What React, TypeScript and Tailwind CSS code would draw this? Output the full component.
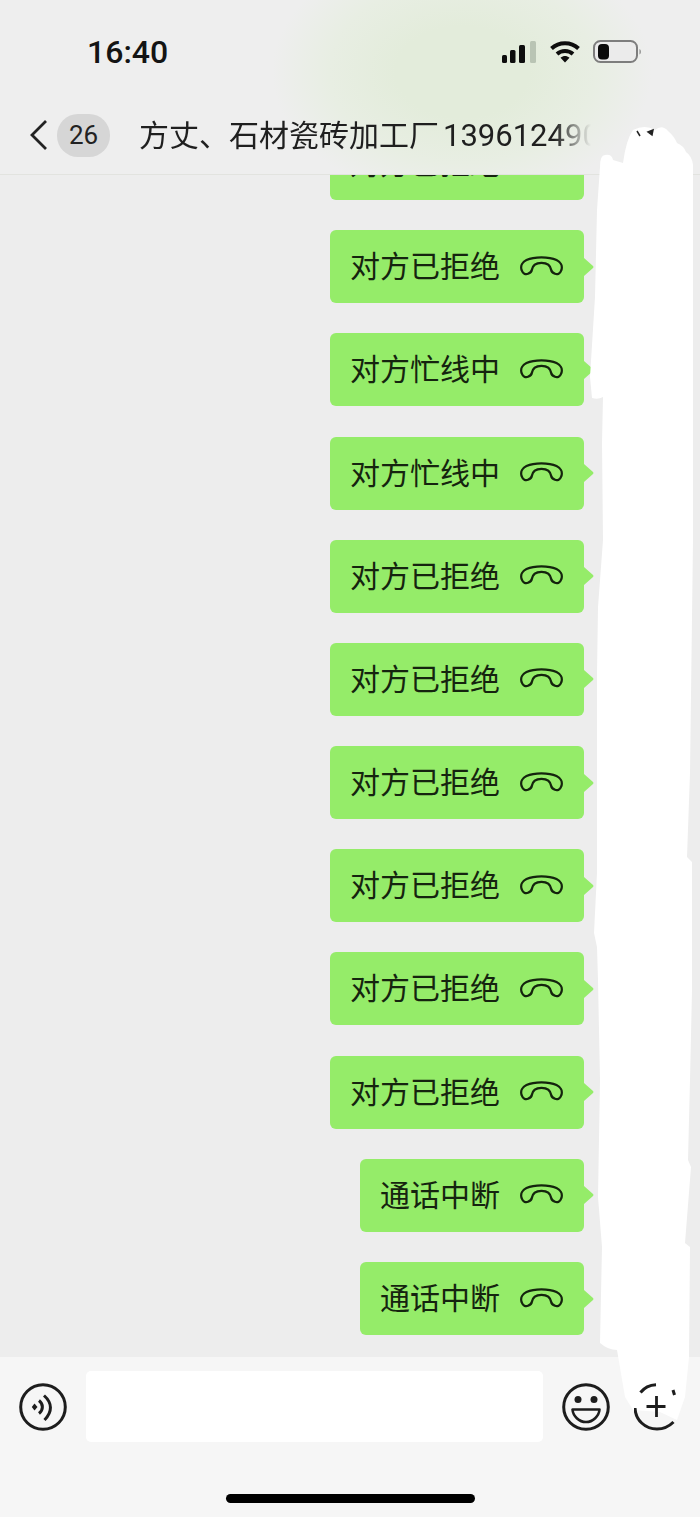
import React from "react";

const cjk = "font-['Roboto','Noto_Sans_CJK_SC',sans-serif]";

function HangUp() {
  return (
    <svg width="43" height="20" viewBox="0 0 43 20" fill="none" className="-mt-[2px] shrink-0">
      <path
        d="M1.800 14.500C0 10 2.500 6 6.500 4C11 1.900 16 1.300 21.500 1.300C27 1.300 32 1.900 36.500 4C40.500 6 43 10 41.200 14.500C40.200 17.500 37.500 18.800 35 17.800C33 17 31.500 16 31.200 14C30.500 9.500 27 6.800 21.500 6.800C16 6.800 12.500 9.500 11.800 14C11.500 16 10 17 8 17.800C5.500 18.800 2.800 17.500 1.800 14.500Z"
        stroke="#14240d"
        strokeWidth="2.300"
        strokeLinejoin="round"
      />
    </svg>
  );
}

function Bubble({ text }: { text: string }) {
  return (
    <div className="relative flex h-[73px] shrink-0 items-center gap-5 rounded-[6px] bg-[#95ec69] pl-5 pr-[21px]">
      <span className={`${cjk} pt-px text-[30px] leading-none text-[#15240f]`}>{text}</span>
      <HangUp />
      <svg width="10" height="18" viewBox="0 0 10 18" className="absolute left-full top-1/2 -translate-y-1/2">
        <path d="M0 0L9 8C9.600 8.600 9.600 9.400 9 10L0 18Z" fill="#95ec69" />
      </svg>
    </div>
  );
}

function StatusIcons() {
  return (
    <div className="flex items-center">
      <svg width="34" height="22" viewBox="0 0 34 22" className="mr-[14px]">
        <rect x="0" y="14" width="5" height="8" rx="1.500" fill="#0d0d0d" />
        <rect x="8" y="9" width="5.500" height="13" rx="1.500" fill="#0d0d0d" />
        <rect x="17" y="4" width="6" height="18" rx="1.500" fill="#0d0d0d" />
        <rect x="28" y="0" width="6" height="22" rx="1.500" fill="#b9c4b4" />
      </svg>
      <svg width="30" height="22" viewBox="0 0 30 22" className="mr-[13px]">
        <path d="M1.500 7.500C9 0.500 21 0.500 28.500 7.500" stroke="#0d0d0d" strokeWidth="4" fill="none" />
        <path d="M7 13C11.500 9 18.500 9 23 13" stroke="#0d0d0d" strokeWidth="4" fill="none" />
        <path d="M10.500 16.800C13.500 14.500 16.500 14.500 19.500 16.800L15 21.500Z" fill="#0d0d0d" />
      </svg>
      <svg width="49" height="24" viewBox="0 0 49 24">
        <rect x="1" y="1" width="43" height="21" rx="6.500" fill="#ebebeb" stroke="#7d7d7d" strokeWidth="2" />
        <rect x="5" y="4" width="11" height="15.500" rx="4" fill="#0a0a0a" />
        <path d="M46.500 9C48.300 9.800 48.300 13.800 46.500 14.500Z" fill="#888" />
      </svg>
    </div>
  );
}

function Header() {
  return (
    <header className="flex h-[175px] shrink-0 flex-col border-b border-[#e2e3df] bg-[#eeeeee] bg-[radial-gradient(ellipse_190px_130px_at_462px_72px,#e3ecdb_35%,#e8eee3_70%,#eeeeee)]">
      <div className="flex h-[104px] shrink-0 items-center justify-between pl-[87px] pr-[58px]">
        <span className="font-['Roboto',sans-serif] text-[32px] font-medium leading-none text-[#141414]">16:40</span>
        <StatusIcons />
      </div>
      <div className="flex h-[62px] shrink-0 items-center">
        <svg width="20" height="32" viewBox="0 0 20 32" className="ml-[29px] shrink-0">
          <path d="M17 2L3 16L17 30" stroke="#222" strokeWidth="2.800" fill="none" />
        </svg>
        <div className="ml-2 flex h-[43px] w-[53px] shrink-0 items-center justify-center rounded-[21px] bg-[#d6d6d6]">
          <span className="font-['Roboto',sans-serif] text-[26px] leading-none text-[#222]">26</span>
        </div>
        <div
          className={`${cjk} ml-[29px] w-[452px] overflow-hidden whitespace-nowrap text-[30px] leading-none text-[#1f1f1f] [mask-image:linear-gradient(to_right,#000_415px,transparent_452px)]`}
        >
          方丈、石材瓷砖加工厂<span className="ml-1 text-[31px]">139612490</span>
        </div>
      </div>
    </header>
  );
}

function Composer() {
  return (
    <footer className="flex flex-1 flex-col bg-[#f6f6f6] pt-[14px]">
      <div className="flex items-center pl-[19px]">
        <svg width="48" height="48" viewBox="0 0 48 48" fill="none" stroke="#1d1d1d" className="shrink-0">
          <circle cx="24" cy="24" r="22.300" strokeWidth="3" />
          <path d="M15.500 20.500L18.500 24L15.500 27.500L12.800 24Z" fill="#1d1d1d" stroke="none" />
          <path d="M20 17.500C24.500 21 24.500 27 20 30.500" strokeWidth="3" />
          <path d="M25 12.500C33.500 20 33.500 29 25.500 37" strokeWidth="3" />
        </svg>
        <div className="ml-[19px] h-[71px] w-[457px] shrink-0 rounded-[5px] bg-white" />
        <svg width="48" height="48" viewBox="0 0 48 48" fill="none" stroke="#1d1d1d" className="ml-[19px] shrink-0">
          <circle cx="24" cy="24" r="22.300" strokeWidth="3" />
          <circle cx="16" cy="16.500" r="3.500" fill="#1d1d1d" stroke="none" />
          <circle cx="32" cy="16.500" r="3.500" fill="#1d1d1d" stroke="none" />
          <path d="M10.500 26.500H37.500C37 33 31 39 24 39C17 39 11 33 10.500 26.500Z" strokeWidth="2.600" strokeLinejoin="round" />
        </svg>
        <svg width="48" height="48" viewBox="0 0 48 48" fill="none" stroke="#1d1d1d" strokeWidth="3" className="relative z-20 ml-6 shrink-0">
          <path d="M6.500 9.500C10 5 15 2 22 1.700" />
          <path d="M1 25C1.500 37 11 46 23 46C30 46 35 43.500 39.500 39" />
          <path d="M39 7L40.500 12" />
          <path d="M12.500 23.500H31.500M22.500 13V34" strokeWidth="2.800" />
        </svg>
      </div>
      <div className="mx-auto mt-[52px] h-[9px] w-[249px] rounded-full bg-black" />
    </footer>
  );
}

function Scribble() {
  return (
    <svg width="700" height="1517" viewBox="0 0 700 1517" className="pointer-events-none absolute inset-0 z-10">
      <path
        fill="#fff"
        d="M633 130Q645 124 655 130Q662 124 668 131Q674 136 677 143Q684 146 686 152Q692 156 693 165L693 540L690 773L687 857L692 862L692 990L690 1080L688 1160L691 1167L685 1243L690 1247L689 1357L685 1397L677 1420L660 1412L633 1410L625 1397L617 1350Q608 1350 600 1343L602 1247L598 1197L600 1080L598 980L597 947L594 933L597 873L597 673L598 607L603 540L602 443L603 397Q598 400 592 398L590 377L595 297L597 210L600 167Q600 155 605 155Q612 154 613 160L623 163Q626 140 633 130Z"
      />
      <path d="M637 131L640 136M648 132L653 130L652 135Z" stroke="#222" strokeWidth="1.500" fill="#222" />
    </svg>
  );
}

export default function App() {
  const messages = [
    "对方已拒绝",
    "对方已拒绝",
    "对方忙线中",
    "对方忙线中",
    "对方已拒绝",
    "对方已拒绝",
    "对方已拒绝",
    "对方已拒绝",
    "对方已拒绝",
    "对方已拒绝",
    "通话中断",
    "通话中断",
  ];
  return (
    <div className="relative flex h-[1517px] w-[700px] flex-col overflow-hidden bg-[#ededed]">
      <Header />
      <main className="flex h-[1182px] shrink-0 flex-col items-end justify-end gap-[30.2px] overflow-hidden bg-[#ededed] pb-[22px] pr-[116px]">
        {messages.map((m, i) => (
          <Bubble key={i} text={m} />
        ))}
      </main>
      <Composer />
      <Scribble />
    </div>
  );
}
